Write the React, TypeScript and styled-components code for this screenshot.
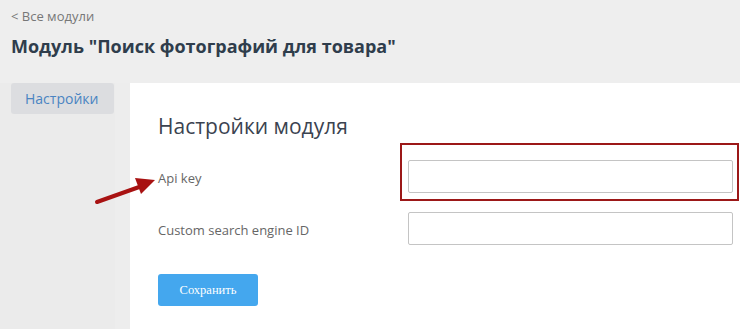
import React from "react";
import styled, { createGlobalStyle } from "styled-components";

const GlobalStyle = createGlobalStyle`
  html, body {
    margin: 0;
    padding: 0;
    background: #eeeeee;
    font-family: "Open Sans", "Noto Sans", sans-serif;
  }
`;

const Page = styled.div`
  position: relative;
  width: 740px;
  height: 329px;
  overflow: hidden;
  background: #eeeeee;
`;

const Header = styled.header`
  padding: 7px 11px 0;
  height: 76px;
  box-sizing: border-box;
`;

const BackLink = styled.a`
  display: block;
  font-size: 13px;
  line-height: 19px;
  color: #777;
  text-decoration: none;
`;

const Title = styled.h1`
  margin: 8px 0 0;
  font-size: 18px;
  line-height: 24px;
  font-weight: 700;
  color: #2f3d4c;
`;

const Body = styled.div`
  display: flex;
  margin-top: 7px;
  height: 246px;
`;

const Sidebar = styled.nav`
  width: 130px;
  flex: none;
  background: linear-gradient(to right, #ebebeb 115px, #ededed 115px);
`;

const Tab = styled.div<{ $active?: boolean }>`
  margin-left: 11px;
  width: 103px;
  height: 31px;
  box-sizing: border-box;
  padding-left: 14px;
  display: flex;
  align-items: center;
  border-radius: 3px;
  font-size: 14px;
  color: #4a84c2;
  background: ${(p) => (p.$active ? "#dcdde0" : "transparent")};
`;

const Panel = styled.main`
  flex: 1;
  background: #fff;
  padding: 28px 0 0 28px;
`;

const Heading = styled.h2`
  margin: 0 0 19px;
  font-size: 21px;
  line-height: 30px;
  font-weight: 400;
  color: #3b4350;
`;

const Form = styled.div`
  display: grid;
  grid-template-columns: 250px 325px;
  row-gap: 19px;
`;

const Label = styled.label`
  font-size: 13px;
  color: #666;
  display: flex;
  align-items: center;
  padding-top: 3px;
`;

const Field = styled.div`
  position: relative;
`;

const Input = styled.input`
  display: block;
  width: 325px;
  height: 33px;
  box-sizing: border-box;
  border: 1px solid #c4c4c4;
  border-radius: 2px;
  background: #fff;
  outline: none;
`;

const Highlight = styled.div`
  position: absolute;
  top: -17px;
  left: -8px;
  right: -6px;
  bottom: -8px;
  border: 2px solid #9c1818;
  pointer-events: none;
`;

const SaveButton = styled.button`
  margin-top: 29px;
  width: 100px;
  height: 32px;
  border: none;
  border-radius: 3px;
  background: #44a7ee;
  color: #fff;
  font-family: "Liberation Serif", "DejaVu Serif", serif;
  font-size: 12.5px;
`;

const Arrow = styled.svg`
  position: absolute;
  left: 92px;
  top: 172px;
`;

export default function App() {
  return (
    <Page>
      <GlobalStyle />
      <Header>
        <BackLink href="#">&lt; Все модули</BackLink>
        <Title>Модуль "Поиск фотографий для товара"</Title>
      </Header>
      <Body>
        <Sidebar>
          <Tab $active>Настройки</Tab>
        </Sidebar>
        <Panel>
          <Heading>Настройки модуля</Heading>
          <Form>
            <Label>Api key</Label>
            <Field>
              <Input />
              <Highlight />
            </Field>
            <Label>Custom search engine ID</Label>
            <Field>
              <Input />
            </Field>
          </Form>
          <SaveButton>Сохранить</SaveButton>
        </Panel>
      </Body>
      <Arrow width="68" height="36" viewBox="0 0 68 36">
        <line x1="5" y1="30" x2="50" y2="14" stroke="#a81212" strokeWidth="4" strokeLinecap="round" />
        <polygon points="63,8 43,6 49,22" fill="#a81212" />
      </Arrow>
    </Page>
  );
}
